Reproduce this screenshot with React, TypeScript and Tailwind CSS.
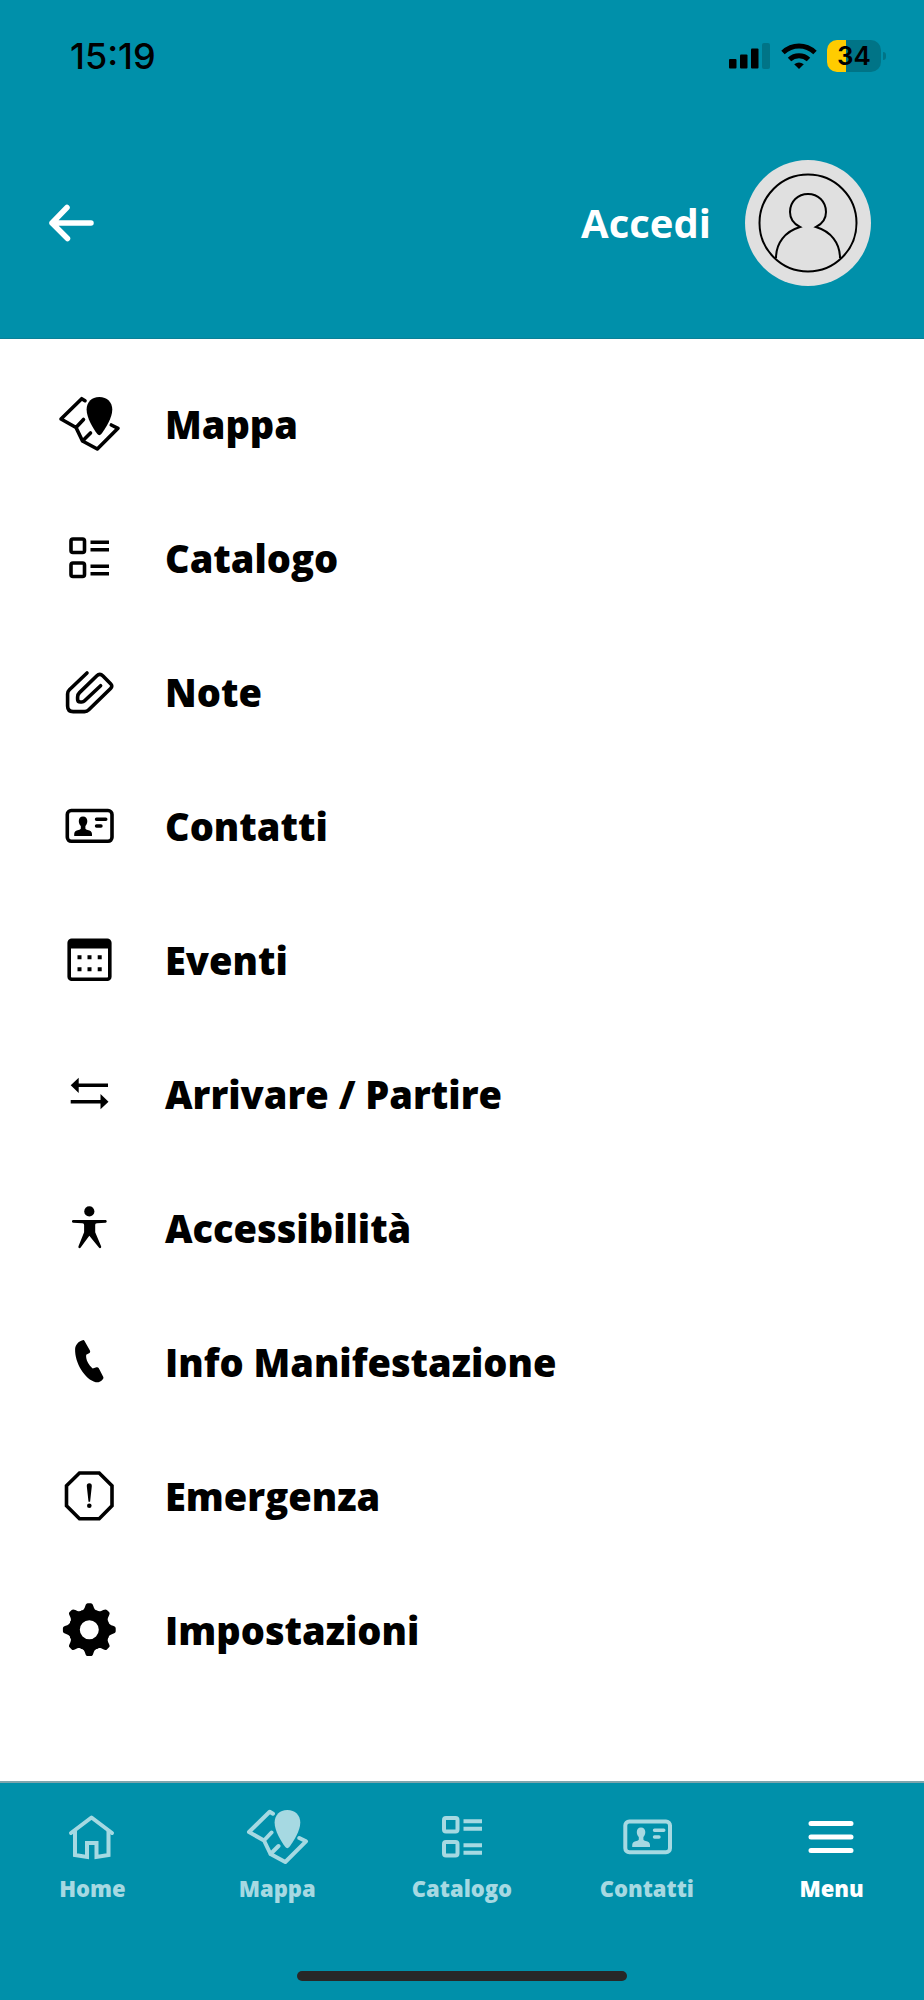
import clsx from 'clsx'
import { ReactNode } from 'react'

type IconProps = {
  children: ReactNode
  stroke?: number
}

type Entry = {
  label: string
  icon: ReactNode
}

const Icon = ({ children, stroke = 3.6 }: IconProps) => (
  <svg
    viewBox="0 0 72 72"
    className="size-18 shrink-0"
    fill="none"
    stroke="currentColor"
    strokeWidth={stroke}
    strokeLinecap="round"
    strokeLinejoin="round"
    aria-hidden="true"
  >
    {children}
  </svg>
)

const HomeIcon = () => (
  <Icon stroke={4}>
    <path d="M15 32 35.5 16.500 56 32" />
    <path d="M19 30v24l12 2V42h9.500v14l12-2V30" strokeLinejoin="miter" />
  </Icon>
)

const MapIcon = ({ stroke }: { stroke?: number }) => (
  <Icon stroke={stroke}>
    <path d="m32 12.7-3.3-2L8 31 23 39.5 29.5 53l14.8 8L65 40.3 58.3 37M23 39.5l7.5-8M29.5 53l8-8" />
    <path
      d="M46.3 9C38.5 9 33.6 14.3 33.6 21.5c0 8.5 6.5 18.5 10.7 24.6 1 1.4 3 1.4 4 0 4.2-6.1 11-16.1 11-24.6C59.3 14.3 54.2 9 46.3 9Z"
      fill="currentColor"
      stroke="none"
    />
  </Icon>
)

const CatalogIcon = ({ stroke }: { stroke?: number }) => (
  <Icon stroke={stroke}>
    <rect x="18" y="17" width="13.5" height="13.5" rx="2" />
    <rect x="18" y="41" width="13.5" height="13.5" rx="2" />
    <path d="M37.5 20.3H56M37.5 27.7H56M37.5 44.3H56M37.5 51.7H56" strokeLinecap="butt" />
  </Icon>
)

const ClipIcon = () => (
  <Icon>
    <path d="M34 17 16.4 33.7Q14.6 35.4 14.6 38v12q0 5.6 5.6 5.6h11.3q2.5 0 4.3-1.8L57.6 32.5q2.4-2.4 0-4.8L50 20q-3.2-3.2-6.4 0L26.5 36.6Q24.6 38.4 24.6 41v2.2q0 2.8 2.8 2.8h1.4q1.6 0 2.8-1.2L47.6 29.7" />
  </Icon>
)

const ContactIcon = ({ stroke }: { stroke?: number }) => (
  <Icon stroke={stroke}>
    <rect x="14.3" y="20.5" width="44.7" height="30.8" rx="4" />
    <path
      d="M30 26.5c-2.7 0-4.2 2-4.2 4.6 0 2 .7 3.7 2 4.9v2.2c0 1-.9 1.3-2.3 1.7-2.6.7-4.3 1.5-4.3 4V46H39v-2.1c0-2.5-1.7-3.3-4.3-4-1.4-.4-2.3-.7-2.3-1.7V36c1.2-1.2 1.900-2.900 1.900-4.900 0-2.600-1.600-4.600-4.300-4.600Z"
      fill="currentColor"
      stroke="none"
    />
    <path d="M43.5 29.3h9.3M43.5 36h4.5" strokeWidth="3.4" />
  </Icon>
)

const CalendarIcon = () => (
  <Icon>
    <rect x="16.2" y="16.2" width="40.6" height="39" rx="2.5" />
    <path d="M16 17h41v7.5H16Z" fill="currentColor" stroke="none" />
    <path
      d="M24.5 31.3h4v4h-4ZM34.5 31.3h4v4h-4ZM44.7 31.3h4v4h-4ZM24.5 43.3h4v4h-4ZM34.5 43.3h4v4h-4ZM44.7 43.3h4v4h-4Z"
      fill="currentColor"
      stroke="none"
    />
  </Icon>
)

const ArrowsIcon = () => (
  <Icon>
    <path d="M24 27.3h31M17.7 43.7h31" strokeLinecap="butt" />
    <path d="m17.7 27.3 8-7.6v15.2ZM55.5 43.7l-8-7.6v15.2Z" fill="currentColor" stroke="none" />
  </Icon>
)

const PersonIcon = () => (
  <Icon>
    <circle cx="36.3" cy="19.4" r="5.1" fill="currentColor" stroke="none" />
    <path
      d="M20 28h32.7c1.4 0 1.4 2.6 0 2.7L44 31.3c-1.4.1-1.8.8-1.8 2v7l5.9 14c.6 1.6-1.3 2.7-2.2 1.3L36.3 43.8l-8.6 11.8c-1 1.4-2.8.3-2.2-1.3l5.6-14v-7c0-1.2-.4-1.9-1.8-2L20 30.7c-1.4-.1-1.4-2.7 0-2.7Z"
      fill="currentColor"
      stroke="none"
    />
  </Icon>
)

const PhoneIcon = () => (
  <Icon>
    <path
      d="M29.7 14.2c.7-.4 1.3-.2 1.7.5l5.5 9.8c.5 1 .3 1.8-.4 2.6l-3.3 1.7c-.7 4.5 2.3 10.2 6.5 13.8l3.8-1.4c1-.2 1.7.1 2.3 1l4.5 8.8c.3.7.2 1.3-.3 1.9-1.7 2.4-4.5 3.7-7.3 3.3C32.3 53.5 21.7 37.5 22.1 23c.3-4.2 3.4-7.9 7.6-8.8Z"
      fill="currentColor"
      stroke="none"
    />
  </Icon>
)

const AlertIcon = () => (
  <Icon>
    <path d="M26.5 13h19.7L59 25.8v20L46.2 58.7H26.5L13.5 45.8v-20Z" strokeLinejoin="miter" />
    <path d="M36.3 23.3c-1.7 0-2.7 1.2-2.5 3l1.7 15.4h1.6l1.7-15.4c.2-1.8-.8-3-2.5-3Z" fill="currentColor" stroke="none" />
    <circle cx="36.3" cy="45.7" r="2.3" fill="currentColor" stroke="none" />
  </Icon>
)

const gearAngles = [0, 45, 90, 135, 180, 225, 270, 315]

const GearIcon = () => (
  <Icon>
    <circle cx="36.3" cy="35.7" r="15" strokeWidth="11" />
    {gearAngles.map((angle) => (
      <path
        key={angle}
        transform={`rotate(${angle} 36.3 35.7)`}
        d="M28 17c2.7-.8 3.5-2.5 4.3-5 .5-1.8 1.3-2.7 2.5-2.7h3c1.2 0 2 .9 2.5 2.7.8 2.5 1.6 4.2 4.3 5l-3.3 6H31.3Z"
        fill="currentColor"
        stroke="none"
      />
    ))}
  </Icon>
)

const MenuIcon = () => (
  <Icon stroke={5}>
    <path d="M15 22.5h40M15 36h40M15 49.5h40" />
  </Icon>
)

const menuEntries: Entry[] = [
  { label: 'Mappa', icon: <MapIcon /> },
  { label: 'Catalogo', icon: <CatalogIcon /> },
  { label: 'Note', icon: <ClipIcon /> },
  { label: 'Contatti', icon: <ContactIcon /> },
  { label: 'Eventi', icon: <CalendarIcon /> },
  { label: 'Arrivare / Partire', icon: <ArrowsIcon /> },
  { label: 'Accessibilità', icon: <PersonIcon /> },
  { label: 'Info Manifestazione', icon: <PhoneIcon /> },
  { label: 'Emergenza', icon: <AlertIcon /> },
  { label: 'Impostazioni', icon: <GearIcon /> },
]

const tabs: Entry[] = [
  { label: 'Home', icon: <HomeIcon /> },
  { label: 'Mappa', icon: <MapIcon stroke={4} /> },
  { label: 'Catalogo', icon: <CatalogIcon stroke={4} /> },
  { label: 'Contatti', icon: <ContactIcon stroke={4} /> },
  { label: 'Menu', icon: <MenuIcon /> },
]

const StatusBar = () => (
  <div className="flex h-28 items-center justify-between pr-[38px] pl-[70px] font-['Inter',sans-serif] text-black">
    <span className="text-[36px] leading-10 font-medium">15:19</span>
    <div className="flex items-center gap-[10px]">
      <svg viewBox="0 0 42 26" className="h-[26px] w-[42px]" fill="currentColor" aria-hidden="true">
        <rect x="0" y="16" width="7.5" height="9.5" rx="1" />
        <rect x="11" y="11.5" width="7.5" height="14" rx="1" />
        <rect x="22" y="5.5" width="7.5" height="20" rx="1" />
        <rect x="33" y="0" width="8" height="26" rx="2" className="text-[#007487]" />
      </svg>
      <svg viewBox="0 0 36 28" className="h-7 w-9" fill="none" stroke="currentColor" strokeWidth="5" aria-hidden="true">
        <path d="M2 10.5Q9 4 18 4t16 6.5M8.5 17.5q4-3.8 9.5-3.8t9.5 3.8" />
        <path d="M18 27l-4.8-4.7q4.8-3.6 9.6 0Z" fill="currentColor" stroke="none" />
      </svg>
      <div className="flex items-center gap-[2px]">
        <div className="flex h-8 w-[54px] items-center justify-center rounded-[10px] bg-linear-to-r from-[#ffcc00] from-35% to-[#007487] to-35% text-[26px] leading-8 font-semibold">
          34
        </div>
        <div className="h-2 w-[3px] rounded-r-full bg-[#007487]" />
      </div>
    </div>
  </div>
)

const Header = () => (
  <header className="border-b border-[#0a8097] bg-[#0090aa] text-white">
    <StatusBar />
    <div className="flex items-center justify-between pt-12 pr-[53px] pb-[52px] pl-12">
      <button type="button" aria-label="Indietro" className="flex">
        <svg
          viewBox="0 0 48 48"
          className="size-12"
          fill="none"
          stroke="currentColor"
          strokeWidth="5.5"
          strokeLinecap="round"
          strokeLinejoin="round"
          aria-hidden="true"
        >
          <path d="M43 24H4M19 8.5 4 24l15.500 15.500" />
        </svg>
      </button>
      <button type="button" className="flex items-center gap-[34px]">
        <span className="text-[40px] leading-12 font-bold">Accedi</span>
        <svg viewBox="0 0 126 126" className="size-[126px]" fill="none" stroke="black" strokeWidth="2" aria-hidden="true">
          <circle cx="63" cy="63" r="63" fill="#e0e0e0" stroke="none" />
          <circle cx="63" cy="63" r="48.5" />
          <path d="M31 98c0-15 9-26.5 24-31C48 63.5 45 58 45 52c0-10.5 8-18 18-18s18 7.5 18 18c0 6-3 11.5-10 15 15 4.5 24 16 24 31" />
        </svg>
      </button>
    </div>
  </header>
)

const TabBar = () => (
  <nav className="border-t-2 border-[#7fa5ad] bg-[#0090aa]">
    <ul className="grid grid-cols-5 pt-[18px]">
      {tabs.map(({ label, icon }) => (
        <li key={label}>
          <a
            href="#"
            className={clsx('flex flex-col items-center', label === 'Menu' ? 'text-white' : 'text-[#a6d9e2]')}
          >
            {icon}
            <span className="text-[22px] leading-[30px] font-extrabold">{label}</span>
          </a>
        </li>
      ))}
    </ul>
    <div className="mx-auto mt-[68px] mb-[19px] h-[10px] w-[330px] rounded-full bg-[#272727]" />
  </nav>
)

const App = () => (
  <div className="flex min-h-screen flex-col bg-white font-['Open_Sans',sans-serif] text-black">
    <Header />
    <main className="grow pt-[18px]">
      <ul>
        {menuEntries.map(({ label, icon }) => (
          <li key={label}>
            <a href="#" className="flex h-[134px] items-center gap-10 pr-6 pl-[53px]">
              {icon}
              <span className="text-[38px] leading-12 font-extrabold">{label}</span>
            </a>
          </li>
        ))}
      </ul>
    </main>
    <TabBar />
  </div>
)

export default App
